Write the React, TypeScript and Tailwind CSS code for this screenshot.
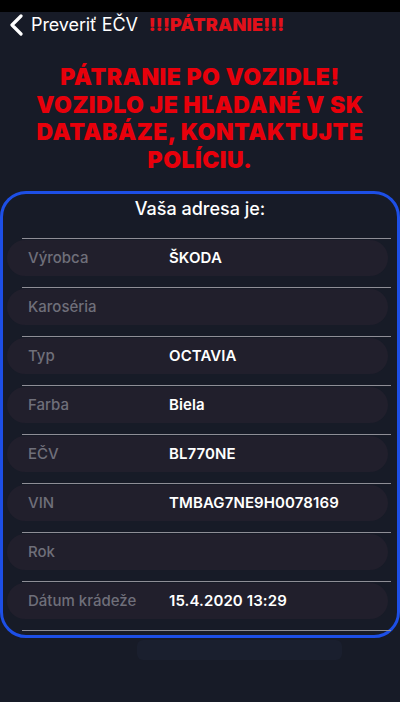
const rows: { label: string; value: string }[] = [
  { label: 'Výrobca', value: 'ŠKODA' },
  { label: 'Karoséria', value: '' },
  { label: 'Typ', value: 'OCTAVIA' },
  { label: 'Farba', value: 'Biela' },
  { label: 'EČV', value: 'BL770NE' },
  { label: 'VIN', value: 'TMBAG7NE9H0078169' },
  { label: 'Rok', value: '' },
  { label: 'Dátum krádeže', value: '15.4.2020 13:29' },
]

function ChevronLeft() {
  return (
    <svg width="16" height="22" viewBox="0 0 16 22" fill="none">
      <path d="M12 2L3 11l9 9" stroke="white" strokeWidth="3.2" strokeLinecap="round" strokeLinejoin="round" />
    </svg>
  )
}

export default function App() {
  return (
    <div
      className="w-[400px] h-[702px] overflow-hidden bg-[#171b27] flex flex-col"
      style={{ fontFamily: 'Inter, "Noto Sans", sans-serif' }}
    >
      {/* status bar */}
      <div className="h-[12px] bg-black shrink-0" />

      {/* nav bar */}
      <div className="h-[26px] flex items-center pl-[9px]">
        <ChevronLeft />
        <span className="ml-[6px] text-white text-[18px] leading-none tracking-[-0.1px]">Preveriť EČV</span>
        <span className="ml-[11px] text-[#e3101a] text-[18px] font-black leading-none tracking-[0.2px]">!!!PÁTRANIE!!!</span>
      </div>

      {/* alert */}
      <div className="mt-[26px] px-2 text-center text-[#e8000b] text-[23px] font-black leading-[27.5px] uppercase tracking-[0.5px]">
        Pátranie po vozidle!
        <br />
        Vozidlo je hľadané v SK
        <br />
        databáze, kontaktujte
        <br />
        políciu.
      </div>

      {/* card */}
      <div className="mt-[17px] border-[3px] border-[#1d4fe6] rounded-[26px] pb-[4px]">
        <div className="h-[44px] pt-[3px] flex justify-center text-white text-[18px] font-medium leading-[24px]">
          Vaša adresa je:
        </div>
        {rows.map(r => (
          <div key={r.label}>
            <div className="h-px bg-[#8e8e96] ml-[19px] mr-[6px]" />
            <div className="mt-[1px] mb-[11px] ml-[4px] mr-[9px] h-[36px] rounded-full bg-[#211f2c] flex items-center">
              <span className="w-[162px] pl-[21px] text-[#6f6f7a] text-[15px] font-medium">{r.label}</span>
              <span className="text-white text-[15px] font-semibold tracking-[0.1px]">{r.value}</span>
            </div>
          </div>
        ))}
        <div className="h-px bg-[#8e8e96] ml-[19px] mr-[6px]" />
      </div>

      {/* faded content behind */}
      <div className="relative h-[40px]">
        <div className="absolute left-[137px] top-[2px] w-[205px] h-[20px] rounded-md bg-[#1a1f2e]" />
      </div>
    </div>
  )
}
